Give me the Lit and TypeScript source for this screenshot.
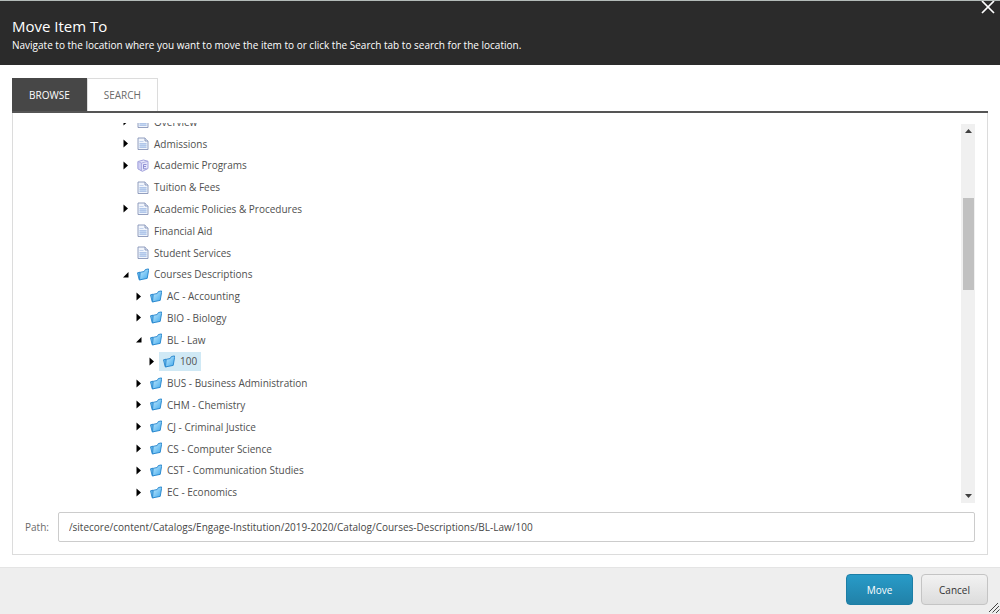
import { LitElement, html, css, svg, nothing } from "lit";
import { customElement, state } from "lit/decorators.js";
import { classMap } from "lit/directives/class-map.js";

type Kind = "page" | "cube" | "folder";
type Toggle = "closed" | "open" | "none";
interface Item {
  label: string;
  kind: Kind;
  toggle: Toggle;
  level: number;
}

const item = (label: string, kind: Kind, toggle: Toggle, level: number): Item => ({ label, kind, toggle, level });

const ITEMS: Item[] = [
  item("Overview", "page", "closed", 1),
  item("Admissions", "page", "closed", 1),
  item("Academic Programs", "cube", "closed", 1),
  item("Tuition & Fees", "page", "none", 1),
  item("Academic Policies & Procedures", "page", "closed", 1),
  item("Financial Aid", "page", "none", 1),
  item("Student Services", "page", "none", 1),
  item("Courses Descriptions", "folder", "open", 1),
  item("AC - Accounting", "folder", "closed", 2),
  item("BIO - Biology", "folder", "closed", 2),
  item("BL - Law", "folder", "open", 2),
  item("100", "folder", "closed", 3),
  item("BUS - Business Administration", "folder", "closed", 2),
  item("CHM - Chemistry", "folder", "closed", 2),
  item("CJ - Criminal Justice", "folder", "closed", 2),
  item("CS - Computer Science", "folder", "closed", 2),
  item("CST - Communication Studies", "folder", "closed", 2),
  item("EC - Economics", "folder", "closed", 2),
];

const GLYPHS = {
  page: svg`
    <path d="M1 1h7l3 3v8.500H1z" fill="#f1f5fc" stroke="#8794b8" stroke-width=".9"/>
    <path d="M2.500 6h7v5h-7z" fill="#c3d6f1"/>
    <path d="M8 1v3h3" fill="#dfe6f3" stroke="#8794b8" stroke-width=".9"/>
    <path d="M2.500 4.500h4M2.500 6.500h7M2.500 8.500h7M2.500 10.500h7" stroke="#a5bce4" stroke-width=".6"/>`,
  cube: svg`
    <path d="M1 2.500L6.500 1 11 2.300v7.200L5.500 12.300 1 9.800z" fill="#e6e6fb" stroke="#a3a3dc"/>
    <path d="M1 2.500l3.500 1.500v7.800L1 9.800z" fill="#cfcff4" stroke="#a3a3dc" stroke-width=".8"/>
    <path d="M4.500 4L11 2.300" stroke="#a3a3dc" stroke-width=".8"/>
    <path d="M9.500 5.500H6.500v4.300h3M6.500 7.500h2.500" stroke="#8686cf" stroke-width=".9"/>`,
  folder: svg`
    <defs>
      <linearGradient id="front" x1="0" y1="0" x2="1" y2="1">
        <stop offset="0" stop-color="#c6ecff"/>
        <stop offset="1" stop-color="#3ea8ec"/>
      </linearGradient>
    </defs>
    <path d="M.5 4.800L3 4.200 4.500 11.500l-2.300.3z" fill="#6cbdf1" stroke="#2585cc" stroke-width=".9"/>
    <path d="M3.200 4.300l4-.8L8.300 1.600l3.100-.7.200 1.500-1.400 8-7.700 1.500z" fill="url(#front)" stroke="#2585cc" stroke-width=".9"/>`,
};

@customElement("tree-row")
class TreeRow extends LitElement {
  static properties = { item: { attribute: false }, selected: { type: Boolean } };
  declare item: Item;
  declare selected: boolean;

  static styles = css`
    :host { display: flex; align-items: center; min-height: 0; }
    .toggle, .node {
      box-sizing: border-box; font: inherit; color: inherit; border: 0; margin: 0; background: none; cursor: pointer;
    }
    .toggle {
      width: 12px; height: 16px; padding: 0 2px; flex: none; display: flex; align-items: center; color: #000;
    }
    .toggle svg { width: 7px; height: 9px; flex: none; fill: currentColor; }
    .node { display: flex; align-items: center; gap: 5px; height: 19px; padding: 0 4px; white-space: nowrap; }
    .node svg { width: 12px; height: 13px; flex: none; }
    .selected { background: #d0e9f5; }
    .l1 { margin-left: 96px; }
    .l2 { margin-left: 109px; }
    .l3 { margin-left: 122px; }
  `;

  render() {
    const { label, kind, toggle, level } = this.item;
    return html`
      ${toggle === "none"
        ? html`<span class="toggle l${level}"></span>`
        : html`<button class="toggle l${level}" aria-label="Toggle ${label}">
            <svg viewBox="0 0 7 9" aria-hidden="true">
              ${toggle === "open"
                ? svg`<path d="M5.500 2v5.500H0z"/>`
                : svg`<path d="M.5 .5L5 4.500.5 8.500z"/>`}
            </svg>
          </button>`}
      <button class=${classMap({ node: true, selected: this.selected })}>
        <svg viewBox="0 0 12 13" fill="none" aria-hidden="true">${GLYPHS[kind]}</svg>${label}
      </button>
    `;
  }
}

@customElement("app-root")
export class AppRoot extends LitElement {
  @state() private selected = "100";
  @state() private path =
    "/sitecore/content/Catalogs/Engage-Institution/2019-2020/Catalog/Courses-Descriptions/BL-Law/100";

  static styles = css`
    :host {
      display: flex; flex-direction: column; height: 100vh; box-sizing: border-box;
      background: #fff; color: #505050; border-top: 1px solid #b3bbb8;
      font: 10px/16px "Open Sans", "Noto Sans", sans-serif;
    }
    *, *::before { box-sizing: border-box; }
    button, input { font: inherit; }
    header {
      display: flex; justify-content: space-between; align-items: flex-start;
      background: #2b2b2b; color: #fff; padding: 14px 0 10px 12px; min-height: 64px;
    }
    h1 { font-size: 15px; line-height: 22px; font-weight: 400; margin: 0; }
    .hint { margin: 0; line-height: 16px; }
    .close {
      border: 0; background: none; padding: 0; margin: -14px 5px 0 0; width: 14px; height: 14px; color: #fff;
    }
    svg { display: block; }
    main { flex: 1; min-height: 0; display: flex; flex-direction: column; padding: 13px 12px 12px; }
    .tabs { display: flex; border-bottom: 2px solid #555; }
    .tab {
      height: 33px; padding: 0 16px; border: 1px solid #dcdcdc; border-bottom: 0; background: #fff; color: #6a6a6a;
    }
    .active { background: #474747; border-color: #474747; color: #fff; }
    .panel {
      flex: 1; min-height: 0; display: flex; flex-direction: column; gap: 9px;
      border: 1px solid #dcdcdc; border-top: 0; padding: 10px 12px 12px;
    }
    .view { flex: 1; min-height: 0; display: flex; overflow: hidden; }
    .tree {
      flex: 1; margin: -12px 0 0; padding: 0; display: grid; grid-auto-rows: minmax(0, 1fr);
    }
    .bar {
      width: 14px; flex: none; background: #f0f0f0; color: #404040; margin-top: 1px;
      display: flex; flex-direction: column; align-items: center; padding: 5px 0;
    }
    .thumb { width: 11px; flex: 92; background: #c1c1c1; }
    .before { flex: 64; }
    .after { flex: 202; }
    .path { display: flex; align-items: center; gap: 9px; color: #6a6a6a; }
    .path input {
      flex: 1; min-width: 0; height: 30px; border: 1px solid #ccc; border-radius: 2px; padding: 0 10px;
      color: #474747; background: #fff; outline: 0;
    }
    footer {
      background: #eee; border-top: 1px solid #e4e4e4; min-height: 47px; padding: 6px 0 0 12px;
      display: flex; justify-content: flex-end; gap: 8px;
    }
    .btn {
      width: 67px; height: 31px; border-radius: 4px; border: 1px solid #c4c4c4; padding: 0;
      background: linear-gradient(#f2f2f2, #dcdcdc); color: #333;
    }
    .primary { border-color: #1c7ea6; background: linear-gradient(#289bc8, #2181a8); color: #fff; }
    .grip { align-self: flex-end; margin-left: -8px; width: 12px; height: 12px; }
  `;

  render() {
    return html`
      <header>
        <div>
          <h1>Move Item To</h1>
          <p class="hint">
            Navigate to the location where you want to move the item to or click the Search tab to search for the location.
          </p>
        </div>
        <button class="close" aria-label="Close">
          <svg width="14" height="14" viewBox="0 0 14 14" aria-hidden="true">
            <path d="M1 0L13 12M13 0L1 12" stroke="currentColor" stroke-width="1.700"/>
          </svg>
        </button>
      </header>
      <main>
        <div class="tabs" role="tablist">
          <button class="tab active" role="tab" aria-selected="true">BROWSE</button>
          <button class="tab" role="tab" aria-selected="false">SEARCH</button>
        </div>
        <section class="panel">
          <div class="view">
            <div class="tree" role="tree">
              ${ITEMS.map(
                (it) => html`<tree-row
                  role="treeitem"
                  aria-level=${it.level}
                  aria-expanded=${it.toggle === "none" ? nothing : String(it.toggle === "open")}
                  .item=${it}
                  .selected=${it.label === this.selected}
                ></tree-row>`
              )}
            </div>
            <div class="bar" aria-hidden="true">
              <svg width="7" height="4" viewBox="0 0 7 4"><path d="M0 4L3.500 0 7 4z" fill="currentColor"/></svg>
              <div class="before"></div>
              <div class="thumb"></div>
              <div class="after"></div>
              <svg width="7" height="4" viewBox="0 0 7 4"><path d="M0 0L3.500 4 7 0z" fill="currentColor"/></svg>
            </div>
          </div>
          <div class="path">
            <label for="path">Path:</label>
            <input id="path" type="text" .value=${this.path} />
          </div>
        </section>
      </main>
      <footer>
        <button class="btn primary">Move</button>
        <button class="btn">Cancel</button>
        <svg class="grip" viewBox="0 0 12 12" aria-hidden="true">
          <path d="M1 10L10 1M4.500 10.500L11 4M8 11L11.500 7.500" stroke="#444" fill="none"/>
        </svg>
      </footer>
    `;
  }
}
